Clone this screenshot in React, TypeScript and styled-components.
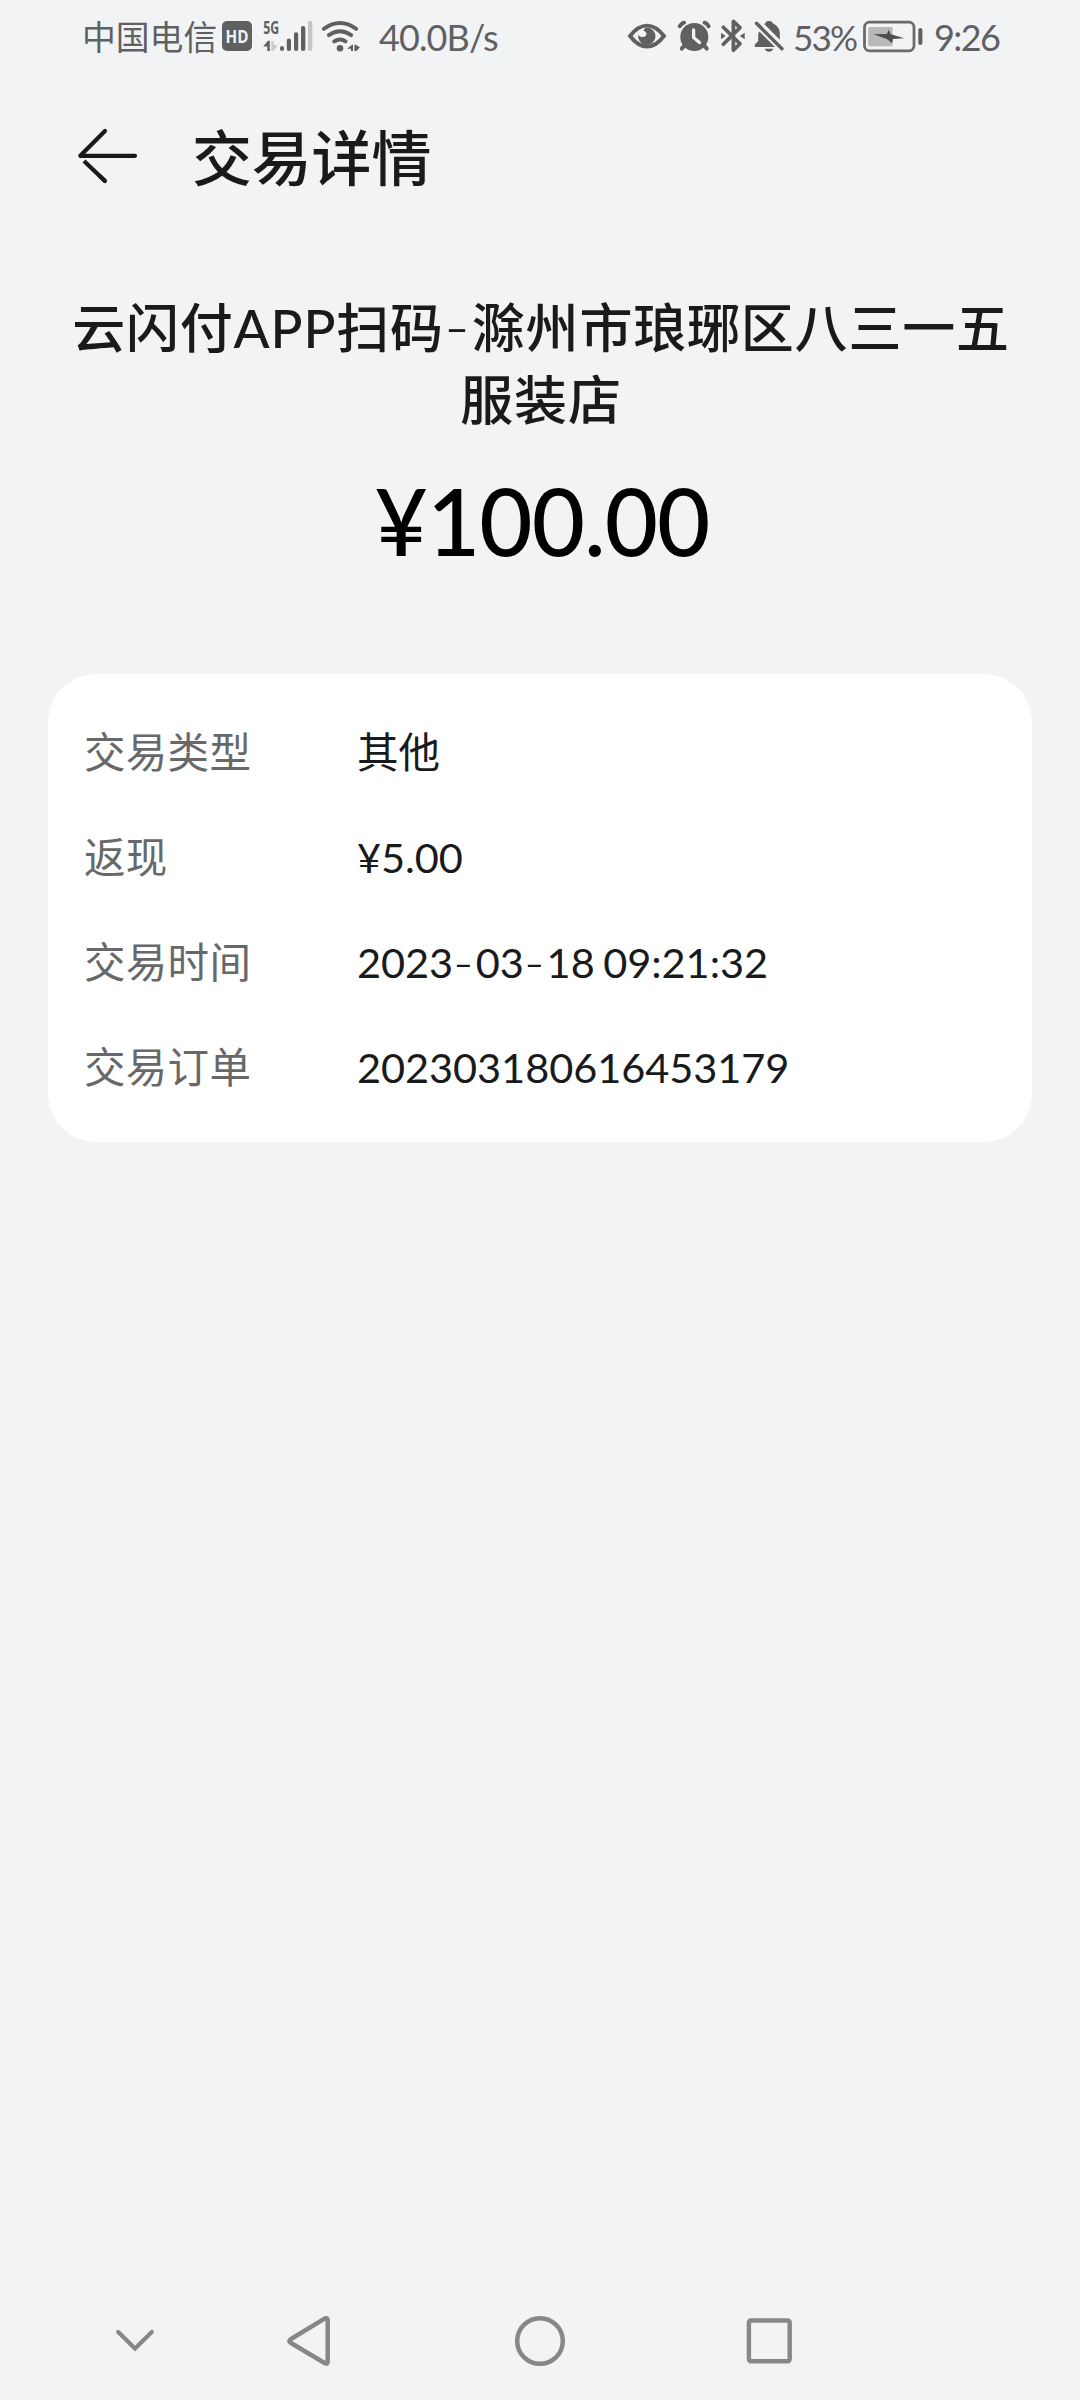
import React from "react";
import styled, { createGlobalStyle } from "styled-components";

const sans = `Lato, "Noto Sans CJK SC", sans-serif`;

const GlobalStyle = createGlobalStyle`
  body { margin: 0; background: #f1f3f5; }
  * { box-sizing: border-box; }
`;

const Screen = styled.div`
  width: 1080px;
  height: 2400px;
  display: flex;
  flex-direction: column;
  background: #f1f3f5;
  font-family: ${sans};
  color: #191a1c;
  overflow: hidden;
`;

const StatusBar = styled.div`
  height: 76px;
  display: flex;
  justify-content: space-between;
  padding: 0 75px 0 82px;
  color: #5f6062;
`;

const StatusGroup = styled.div`
  display: flex;
  height: 76px;
`;

const StatusText = styled.span<{ $width: number; $size?: number; $spacing?: number }>`
  width: ${(p) => p.$width}px;
  font-size: ${(p) => p.$size ?? 36}px;
  letter-spacing: ${(p) => p.$spacing ?? 0}px;
  line-height: 75px;
  white-space: nowrap;
`;

const Glyph = styled.svg`
  display: block;
  flex: none;
`;

const TitleBar = styled.header`
  height: 160px;
  display: flex;
  padding: 0 72px;
  gap: 48px;
`;

const Title = styled.h1`
  margin: 0;
  font-size: 60px;
  font-weight: 500;
  line-height: 164px;
  height: 160px;
  letter-spacing: -0.2px;
`;

const Summary = styled.section`
  height: 438px;
  padding: 56px 46px 0 48px;
  text-align: center;
`;

const Merchant = styled.h2`
  margin: 0;
  font-size: 53px;
  font-weight: 500;
  line-height: 71.5px;
  letter-spacing: 0.8px;
  white-space: nowrap;
`;

const Hyphen = styled.span<{ $size: number }>`
  font-size: ${(p) => p.$size}px;
  font-weight: 300;
  line-height: 0;
  letter-spacing: 2px;
  vertical-align: -4px;
`;

const Amount = styled.div`
  margin: 26px 0 0 2px;
  font-size: 92px;
  font-weight: 500;
  line-height: 120px;
  letter-spacing: -1px;
  color: #000;
`;

const Card = styled.dl`
  margin: 0 48px;
  height: 468px;
  padding: 26px 36px;
  border-radius: 48px;
  background: #fff;
`;

const Row = styled.div`
  display: grid;
  grid-template-columns: 273px 1fr;
  height: 105px;
  line-height: 105px;
  font-size: 41.5px;
`;

const Label = styled.dt`
  color: #67686a;
  letter-spacing: 0.3px;
`;

const Value = styled.dd`
  margin: 0;
  color: #191a1c;
  letter-spacing: -0.05px;
  word-spacing: -2px;
`;

const NavBar = styled.nav`
  margin-top: auto;
  height: 120px;
  display: flex;
  padding-left: 105px;
`;

const NavSlot = styled.div<{ $width: number }>`
  width: ${(p) => p.$width}px;
  height: 120px;
`;

type StripProps = { x: number; width: number; children: React.ReactNode };

/* One icon of the status bar; x is where its drawing starts along the bar. */
const Strip = ({ x, width, children }: StripProps) => (
  <Glyph width={width} height={76} viewBox={`${x} 0 ${width} 76`} fill="#5f6062">
    {children}
  </Glyph>
);

/* Sets hyphens wide and light, level with the middle of the figures. */
const Hyphenated = ({ text, size }: { text: string; size: number }) => (
  <>
    {text.split("-").map((part, i) => (
      <React.Fragment key={i}>
        {i > 0 && <Hyphen $size={size}>-</Hyphen>}
        {part}
      </React.Fragment>
    ))}
  </>
);

const rows = [
  { label: "交易类型", value: "其他" },
  { label: "返现", value: "¥5.00" },
  { label: "交易时间", value: "2023-03-18 09:21:32" },
  { label: "交易订单", value: "202303180616453179" },
];

export default function App() {
  return (
    <Screen>
      <GlobalStyle />
      <StatusBar>
        <StatusGroup>
          <StatusText $width={138} $size={33.8}>中国电信</StatusText>
          <Strip x={220} width={40}>
            <rect x="222" y="21" width="30" height="30" rx="5" />
            <text x="237" y="43.2" textAnchor="middle" fontFamily="Open Sans" fontWeight="700" fontSize="18" textLength="23" lengthAdjust="spacingAndGlyphs" fill="#f1f3f5">HD</text>
          </Strip>
          <Strip x={260} width={60}>
            <text x="263.3" y="34" fontFamily="Open Sans" fontWeight="700" fontSize="18" textLength="16" lengthAdjust="spacingAndGlyphs">5G</text>
            <path d="M267.3 51V46.5H263.2L268 40.7H269.8V51Z" />
            <path d="M271.3 41H273.6V44.5L277.4 46L273.6 50.7H271.3Z" fill="#c8c9cb" />
            <rect x="280" y="46" width="4" height="5" rx="2" />
            <rect x="286.8" y="38.6" width="4.2" height="12.5" rx="2" />
            <rect x="294" y="32.3" width="4.2" height="18.8" rx="2" />
            <rect x="301" y="26" width="4.3" height="25.1" rx="2" />
            <rect x="308" y="20.8" width="4.3" height="30.3" rx="2" fill="#c4c5c7" />
          </Strip>
          <Strip x={320} width={59}>
            <g fill="none" stroke="#5f6062" strokeWidth="3.9" strokeLinecap="round">
              <path d="M323.8 28.8Q340 17 356.2 28.8" />
              <path d="M328.8 35.2Q340 27.4 351.2 35.2" />
              <path d="M334.2 41.4Q340 37.4 345.6 41.4" />
            </g>
            <circle cx="340" cy="48.2" r="3.3" />
            <path d="M351 51V48.7H347L352 44.8H353V51ZM354.4 44.8H355.6L360 47.2L356.4 51H354.4Z" />
          </Strip>
          <StatusText $width={120} $spacing={-0.9}>40.0B/s</StatusText>
        </StatusGroup>
        <StatusGroup>
          <Strip x={626} width={48}>
            <path d="M630 36Q638 25.6 647 25.6T664 36Q656 46.6 647 46.6T630 36Z" fill="none" stroke="#5f6062" strokeWidth="3.8" />
            <path d="M647 27.6A8.7 8.7 0 1 1 638.3 34.5C640 38.2 646.5 38 646.5 33.8C646.5 32 644.7 30.8 643.3 30.4Q644.7 27.8 647 27.6Z" />
          </Strip>
          <Strip x={674} width={42}>
            <circle cx="694.3" cy="37" r="14" />
            <path d="M679.8 26.2Q681.6 23.4 684 22.7M704.6 22.7Q707 23.4 708.6 26.2M684 46L681.8 48.6M704.6 46L706.7 48.6" fill="none" stroke="#5f6062" strokeWidth="4" strokeLinecap="round" />
            <path d="M693.6 30V37.6L699.5 42.6" fill="none" stroke="#f1f3f5" strokeWidth="3.3" strokeLinecap="round" strokeLinejoin="round" />
          </Strip>
          <Strip x={716} width={34}>
            <path d="M723.3 27.2L740 43.8L733.4 50.3V21.4L740 27.6L723.3 44.3" fill="none" stroke="#5f6062" strokeWidth="3.7" strokeLinecap="round" strokeLinejoin="round" />
            <path d="M721 32.7L725.7 36L721 39.2ZM744.7 32.7V39.2L739.8 36Z" />
          </Strip>
          <Strip x={750} width={43}>
            <path d="M759.4 31.4L775 47H754.8V44.4L758.2 41V34Q758.4 32.4 759.4 31.4Z" />
            <path d="M764.2 24Q765.8 23.5 766 21.8Q769 20 772 21.8Q772.3 23.4 774.5 24.3Q779.7 27.5 779.8 33V39.8Z" />
            <path d="M764.6 48.8H773.3Q772 51.8 769 51.8T764.6 48.8Z" />
            <path d="M756.5 23.3L782 48.7" stroke="#5f6062" strokeWidth="3.4" strokeLinecap="round" />
          </Strip>
          <StatusText $width={68} $size={35} $spacing={-1.8}>53%</StatusText>
          <Strip x={861} width={73}>
            <rect x="864.5" y="22.2" width="49.5" height="28.6" rx="5" fill="none" stroke="#6a6b6d" strokeWidth="2.8" />
            <path d="M870 27H892.5V46.3H870Q868.2 46.3 868.2 44.5V28.8Q868.2 27 870 27Z" fill="#b7b8ba" />
            <path d="M888.5 29.7L890.8 34.2L904.3 38.3L892.8 38.9L892.2 43.3L886.8 39L873.4 34.2L887 34Z" fill="#4c4d4f" />
            <rect x="918.3" y="28" width="4.1" height="17" rx="2" />
          </Strip>
          <StatusText $width={71} $spacing={-1.6}>9:26</StatusText>
        </StatusGroup>
      </StatusBar>

      <TitleBar>
        <Glyph width={72} height={160} viewBox="72 76 72 160" fill="none" stroke="#191a1c" strokeWidth="4.2" strokeLinecap="round" strokeLinejoin="round">
          <path d="M105 131L80.3 155.8H135" />
          <path d="M105 181L84 161" strokeLinecap="butt" />
          <path d="M105 181L100 176.2" />
        </Glyph>
        <Title>交易详情</Title>
      </TitleBar>

      <Summary>
        <Merchant>
          <Hyphenated text="云闪付APP扫码-滁州市琅琊区八三一五" size={70} />
          <br />
          服装店
        </Merchant>
        <Amount>¥100.00</Amount>
      </Summary>

      <Card>
        {rows.map((row) => (
          <Row key={row.label}>
            <Label>{row.label}</Label>
            <Value>
              <Hyphenated text={row.value} size={56} />
            </Value>
          </Row>
        ))}
      </Card>

      <NavBar>
        <NavSlot $width={165}>
          <Glyph width={60} height={120} viewBox="105 2280 60 120" fill="none" stroke="#868789" strokeWidth="4.2" strokeLinecap="round">
            <path d="M118.2 2332L135 2348.6L151.8 2332" />
          </Glyph>
        </NavSlot>
        <NavSlot $width={230}>
          <Glyph width={80} height={120} viewBox="270 2280 80 120" fill="none" stroke="#868789" strokeWidth="4.5" strokeLinejoin="round">
            <path d="M290.6 2339.2L325 2318.4Q327.7 2317.5 327.7 2320V2361.8Q327.7 2364.3 325 2363.2L290.6 2342.8Q288.2 2341 290.6 2339.2Z" />
          </Glyph>
        </NavSlot>
        <NavSlot $width={230}>
          <Glyph width={80} height={120} viewBox="500 2280 80 120" fill="none" stroke="#868789" strokeWidth="4.5">
            <circle cx="540" cy="2341" r="22.8" />
          </Glyph>
        </NavSlot>
        <NavSlot $width={80}>
          <Glyph width={80} height={120} viewBox="730 2280 80 120" fill="none" stroke="#868789" strokeWidth="4.4">
            <rect x="748.9" y="2320.5" width="40.8" height="40.8" rx="2" />
          </Glyph>
        </NavSlot>
      </NavBar>
    </Screen>
  );
}
